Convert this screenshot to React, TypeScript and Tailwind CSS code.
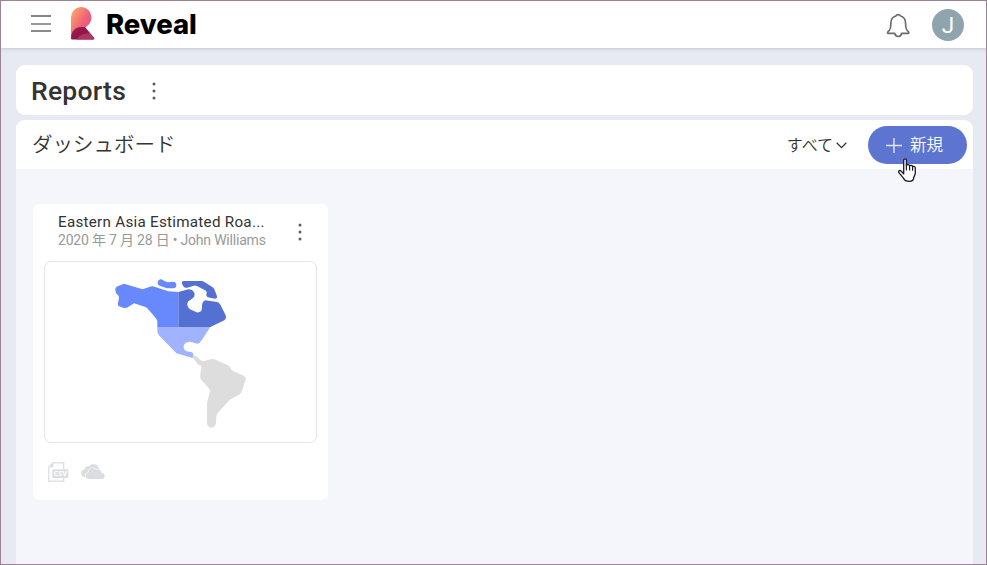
import React from 'react';

const jp = "font-['Roboto','Noto_Sans_CJK_JP',sans-serif]";

function Logo() {
  return (
    <svg className="ml-[20px] mt-[6px] h-[33px] w-[24px] shrink-0" viewBox="0 0 24 33">
      <defs>
        <linearGradient id="logoTop" x1="0" y1="0" x2="1" y2="0.9">
          <stop offset="0" stopColor="#fdb463" />
          <stop offset="0.55" stopColor="#f0647a" />
          <stop offset="1" stopColor="#e5457a" />
        </linearGradient>
        <linearGradient id="logoBase" x1="0" y1="0" x2="1" y2="1">
          <stop offset="0" stopColor="#a01c4e" />
          <stop offset="1" stopColor="#861042" />
        </linearGradient>
      </defs>
      <path d="M0 31V10.2A10.2 10.2 0 0 1 20.4 10.2C20.4 15 17.5 18.5 14 20.5L6 26Z" fill="url(#logoTop)" />
      <path d="M0 31.5C0 24.5 4.2 20 10.5 20H14L22.8 30.5Q24 32.6 21.5 32.6H1.2Q0 32.6 0 31.5Z" fill="url(#logoBase)" />
      <path d="M5.5 32.6C7.5 28.5 12 26.8 18.8 26L22.8 30.5Q24 32.6 21.5 32.6Z" fill="#b03460" />
    </svg>
  );
}

function Kebab({ className }: { className: string }) {
  return (
    <svg className={className} viewBox="0 0 4 18" fill="#5c5c5c">
      <circle cx="2" cy="2" r="1.5" />
      <circle cx="2" cy="9" r="1.5" />
      <circle cx="2" cy="16" r="1.5" />
    </svg>
  );
}

function Bell() {
  return (
    <svg className="mt-[12px] h-[25px] w-[24px]" viewBox="0 0 24 25" fill="none" stroke="#6b6b6b" strokeWidth="1.7" strokeLinejoin="round">
      <path d="M10.2 2.7Q10.4 1.6 12.2 1.6T14.2 2.7C18 3.7 19.6 6.8 19.6 10.5C19.6 15.8 20.3 17.2 22.6 18.9C23.1 19.6 22.8 20.2 22 20.3H15.7C15.2 22.3 14 23.5 12.2 23.5S9.2 22.3 8.7 20.3H2.4C1.6 20.2 1.3 19.6 1.8 18.9C4.1 17.2 4.8 15.8 4.8 10.5C4.8 6.8 6.4 3.7 10.2 2.7Z" />
    </svg>
  );
}

function AmericasMap() {
  return (
    <svg className="ml-[55px] mt-[3px] h-[175px] w-[160px]" viewBox="0 0 480 525">
      <path d="M46 75Q45 67 53 64L70 57Q76 56 82 59L128 73L150 65Q158 62 168 67L205 79L235 81V186H172V168Q170 160 164 155L143 131Q140 127 134 125L102 115L83 127Q77 130 69 128L57 124Q52 122 54 115L57 98Q57 93 54 91Q46 86 46 75Z" fill="#6888fd" />
      <path d="M181 43Q187 43 189 46L202 52L219 50Q229 51 229 60Q229 69 221 70H201L181 63Q172 61 173 52Q174 44 181 43Z" fill="#6888fd" />
      <path d="M235 81L257 75Q264 71 274 74Q284 80 284 89Q284 97 276 101L265 109Q260 116 263 124Q265 131 273 134L290 142Q300 143 304 137Q307 132 306 121Q307 109 316 106L351 111Q357 112 361 119L377 151Q380 160 373 166L331 186H235Z" fill="#5470d3" />
      <path d="M246 56Q245 48 251 48H303Q309 47 313 51L338 67Q343 71 345 78L351 94Q352 101 345 101L323 97Q318 96 319 88Q322 82 318 77L291 63Q284 60 279 63L262 68Q254 70 250 64Z" fill="#5470d3" />
      <path d="M172 186H331L305 226Q300 235 292 236L271 230Q257 230 252 239Q249 248 254 255Q260 261 273 261Q280 262 280 268L278 279L237 267Q229 265 225 260L176 210Q171 204 172 186Z" fill="#a1b3ff" />
      <path d="M280 270L293 277Q300 287 310 289L331 283Q337 281 344 283L383 301Q389 303 391 309Q394 317 401 319L431 332Q439 337 437 345L424 382Q421 388 415 390L389 404L354 443Q350 448 349 455L348 475Q346 487 334 488Q323 486 321 476V418Q322 408 325 398L330 379Q330 374 326 369L303 344Q298 338 301 328L304 306Q305 301 297 300Q291 298 287 289L278 279Z" fill="#ddd" />
    </svg>
  );
}

function CsvIcon() {
  return (
    <svg className="h-[20px] w-[21px]" viewBox="0 0 21 20">
      <path d="M15.7 7V.8H5L.8 5V19.2H15.7V16" fill="none" stroke="#dcdde1" strokeWidth="1.2" />
      <path d="M5.3.5V5.3H.5Z" fill="#dcdde1" />
      <rect x="4.3" y="7.3" width="16" height="8.7" fill="#dcdde1" />
      <text x="12.3" y="14.3" textAnchor="middle" fill="#fff" className="font-['Open_Sans',sans-serif] text-[7.5px] font-bold">CSV</text>
    </svg>
  );
}

function CloudIcon() {
  return (
    <svg className="-mt-[2px] ml-[12px] h-[15px] w-[24px]" viewBox="0 0 24 15">
      <path d="M4.8 13.4C2 13.4.2 11.8.2 9.3C.2 7 1.6 5.6 3.6 5.3C3.8 3 5.6 1.8 8 2.3C9.4.6 11.3 0 13.4.3C16.1.7 17.8 2.6 18 5L12 12Z" fill="#dcdde1" />
      <path d="M8 15C5.9 15 4.5 13.6 4.5 11.8C4.5 10 5.8 8.8 7.5 8.6C7.3 5.9 9.2 4.1 11.5 4.1C13 4.1 14.1 4.8 14.8 5.9C17.9 4.5 20.7 6.4 20.7 9.3C22.7 9.4 23.7 10.5 23.7 12.1C23.7 13.8 22.6 15 20.8 15Z" fill="#dcdde1" stroke="#fff" strokeWidth="1.1" paintOrder="stroke" />
    </svg>
  );
}

function HandCursor() {
  return (
    <svg className="absolute left-[30px] top-[32px] h-[24px] w-[19px]" viewBox="0 0 19 24">
      <path d="M5.7 2.3C5.7.3 8.4.3 8.4 2.3V7.2C9.6 6.2 11.3 6.6 11.6 7.8C12.8 6.9 14.3 7.4 14.6 8.6C16 7.9 17.3 8.6 17.3 10.2V15C17.3 17.2 15.8 18.3 15.6 20.3C15.3 22.6 13.8 23.3 11.2 23.3S6.6 22.7 5.7 20.4L.9 14.7C0 13.2 1.6 11.8 3 13L5.7 15.9Z" fill="#fff" stroke="#15192b" strokeWidth="1.3" strokeLinejoin="round" />
      <path d="M8.4 7V12M11.6 8V12M14.6 8.8V12.2" fill="none" stroke="#15192b" strokeWidth="1.2" strokeLinecap="round" />
    </svg>
  );
}

export default function App() {
  return (
    <div className={`flex h-[565px] w-[987px] flex-col overflow-hidden border border-[#9b8295] bg-[#e7eaf3] text-[#333] ${jp}`}>
      <header className="flex h-[47px] shrink-0 items-start bg-white shadow-[0_1px_3px_rgba(60,70,100,0.22)]">
        <div className="ml-[30px] mt-[14px] flex w-[20px] flex-col gap-[5.5px]">
          <span className="h-[2px] bg-[#858585]" />
          <span className="h-[2px] bg-[#999]" />
          <span className="h-[2px] bg-[#8a8a8a]" />
        </div>
        <Logo />
        <span className="ml-[11px] mt-[5px] font-['Inter',sans-serif] text-[27.5px] font-extrabold leading-[36px] tracking-[-0.05px] text-black">Reveal</span>
        <div className="ml-auto flex">
          <Bell />
          <div className="ml-[22px] mr-[22px] mt-[8px] flex h-[32px] w-[32px] items-center justify-center rounded-full bg-[#90a4ae] pt-px text-[22.5px] leading-none text-white">J</div>
        </div>
      </header>

      <section className="ml-[15px] mr-[13px] mt-[17px] flex h-[50px] shrink-0 items-center rounded-[9px] bg-white">
        <h1 className="ml-[15px] mt-[2px] text-[26.5px] font-medium leading-[32px] tracking-[0.25px]">Reports</h1>
        <Kebab className="ml-[26px] mt-px h-[18px] w-[4px]" />
      </section>

      <main className="ml-[15px] mr-[13px] mt-[5px] flex flex-1 flex-col rounded-t-[9px] bg-[#f5f6fb]">
        <div className="flex h-[49px] shrink-0 items-center rounded-t-[9px] bg-white">
          <h2 className="mb-[3px] ml-[16px] font-['Noto_Sans_CJK_JP',sans-serif] text-[20.5px] font-[350] leading-[30px]">ダッシュボード</h2>
          <div className="ml-auto flex items-center font-['Noto_Sans_CJK_JP',sans-serif] text-[16px] font-[350] leading-[24px]">
            <span className="-mt-px">すべて</span>
            <svg className="ml-[3px] mt-px h-[7px] w-[11px]" viewBox="0 0 11 7" fill="none" stroke="#333" strokeWidth="1.3"><path d="M.7.8L5.5 5.6L10.3.8" /></svg>
          </div>
          <button className="relative ml-[21px] mr-[6px] mt-px flex h-[38px] w-[99px] items-center rounded-full bg-[#5d74d1] font-['Noto_Sans_CJK_JP',sans-serif] text-[16.5px] font-[350] text-white">
            <svg className="ml-[18px] h-[15px] w-[16px]" viewBox="0 0 16 15" stroke="#dfe4fa" strokeWidth="1.4"><path d="M8 0V15M0 7.5H16" /></svg>
            <span className="-mt-px ml-[8px]">新規</span>
            <HandCursor />
          </button>
        </div>

        <article className="ml-[17px] mt-[35px] flex h-[296px] w-[295px] flex-col rounded-[7px] bg-white">
          <div className="flex h-[57px] shrink-0 items-start">
            <div className="ml-[25px] mt-[9px] w-[215px]">
              <h3 className="whitespace-nowrap text-[15.2px] leading-[18px] tracking-[0.27px]">Eastern Asia Estimated Roa...</h3>
              <p className="whitespace-nowrap text-[14px] leading-[18px] tracking-[-0.2px] text-[#999]">2020 年 7 月 28 日 • John Williams</p>
            </div>
            <Kebab className="ml-[25px] mt-[19px] h-[18px] w-[4px]" />
          </div>
          <div className="ml-[11px] h-[182px] w-[273px] shrink-0 rounded-[7px] border border-[#e6e6e8]">
            <AmericasMap />
          </div>
          <div className="ml-[15px] mt-[19px] flex items-center">
            <CsvIcon />
            <CloudIcon />
          </div>
        </article>
      </main>
    </div>
  );
}
